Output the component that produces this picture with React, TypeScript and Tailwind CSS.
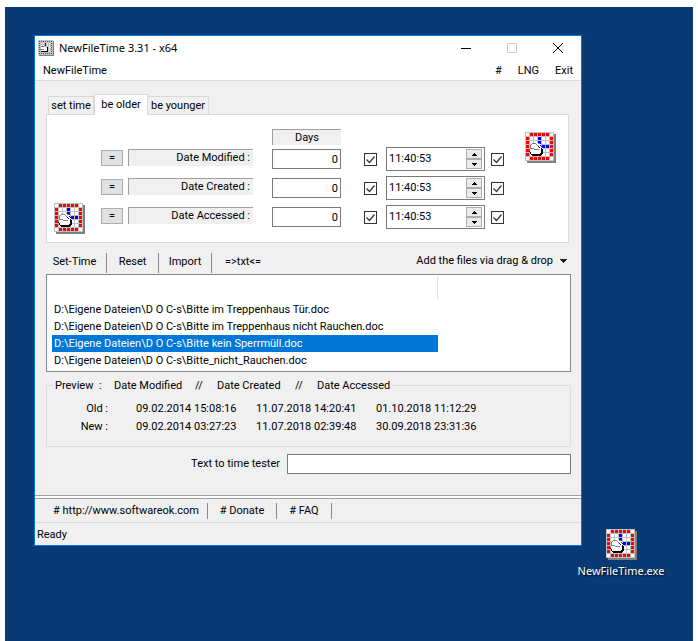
import React, { useState } from "react";

const RED = "#ff0000";
const BLUE = "#0000ff";

function cellColor(row: number, col: number) {
  const rowEdge = row === 0 || row === 6;
  const colEdge = col === 0 || col === 6;
  if (rowEdge && colEdge) return "#ffffff";
  if (rowEdge || colEdge) return RED;
  if (col === 3 && row <= 3) return BLUE;
  if (row === 3 && col >= 4) return BLUE;
  return "#ffffff";
}

function AppIcon() {
  const cells = [0, 1, 2, 3, 4, 5, 6];
  return (
    <svg width="31" height="31" viewBox="0 0 31 31" shapeRendering="crispEdges" aria-hidden="true" className="block shrink-0">
      <path d="M2 2h29v29H2z" fill="#808080" />
      <path d="M0 0h29v29H0z" fill="#c0c0c0" />
      {cells.map((r) =>
        cells.map((c) => (
          <rect key={r + "-" + c} x={1 + c * 4} y={1 + r * 4} width="3" height="3" fill={cellColor(r, c)} />
        )),
      )}
      <path d="M5 14h1v-1h1v-1h5v-1h3v1h1v2h1v2h1v2h-1v3h-1v2h-1v1H6v-2H5z" fill="#fff" />
      <path d="M7 11h4v1H7zM6 12h1v1H6zM5 13h1v3H5zM11 12h1v1h-1zM12 13h1v1h-1zM13 11h2v1h-2zM5 16h4v1H5zM9 17h5v1H9zM4 17h1v2H4z" fill="#808080" />
      <path d="M13 14h1v1h-1zM14 15h1v1h-1zM15 13h1v1h-1zM16 14h1v1h-1z" fill={BLUE} />
      <path d="M4 19h1v1H4zM5 20h1v2H5zM6 22h9v-1h1v-5h1v1h1v5h-1v1h-1v1H7v-1H6z" fill="#000" />
    </svg>
  );
}

function TitleIcon() {
  const dots = [0, 1, 2, 3, 4, 5, 6];
  return (
    <svg width="16" height="16" viewBox="0 0 16 16" shapeRendering="crispEdges" aria-hidden="true" className="block shrink-0">
      <path d="M1 1h15v15H1z" fill="#808080" />
      <path d="M0 0h15v15H0z" fill="#c0c0c0" />
      {dots.map((r) =>
        dots.map((c) => {
          const edge = r === 0 || c === 0 || r === 6 || c === 6;
          return <rect key={r + "-" + c} x={1 + c * 2} y={1 + r * 2} width="1" height="1" fill={edge ? "#e02030" : "#ffffff"} />;
        }),
      )}
      <path d="M3 7h4v1h2v4H3z" fill="#fff" />
      <path d="M3 6h3v1H3zM2 9h4v1H2z" fill="#808080" />
      <path d="M3 11h6v1H3zM9 7h1v5H9z" fill="#000" />
      <path d="M7 3h1v3H7z" fill={BLUE} />
    </svg>
  );
}

function CheckBox({ label }: { label: string }) {
  const [on, setOn] = useState(true);
  return (
    <span className="relative block size-[13px]">
      <input
        type="checkbox"
        aria-label={label}
        checked={on}
        onChange={() => setOn(!on)}
        className="block size-[13px] appearance-none border border-[#333333] bg-white"
      />
      {on && (
        <svg viewBox="0 0 13 13" aria-hidden="true" className="pointer-events-none absolute inset-0 size-[13px]">
          <path d="M2.5 6.5l3 3 5-6" fill="none" stroke="#333333" strokeWidth="1.2" />
        </svg>
      )}
    </span>
  );
}

function Spinner({ name }: { name: string }) {
  return (
    <div className="flex h-6 w-[99px] border border-[#7a7a7a] bg-white px-0.5 py-px">
      <input aria-label={name + " time"} defaultValue="11:40:53" className="min-w-0 flex-1 outline-none" />
      <div className="flex w-4 flex-col">
        <button aria-label={name + " up"} className="flex flex-1 items-center justify-center border border-[#adadad] bg-[#ebebeb]">
          <svg width="5" height="3" viewBox="0 0 5 3" shapeRendering="crispEdges"><path d="M2 0h1v1h1v1h1v1H0V2h1V1h1z" /></svg>
        </button>
        <button aria-label={name + " down"} className="flex flex-1 items-center justify-center border border-[#adadad] bg-[#ebebeb]">
          <svg width="5" height="3" viewBox="0 0 5 3" shapeRendering="crispEdges"><path d="M0 0h5v1H4v1H3v1H2V2H1V1H0z" /></svg>
        </button>
      </div>
    </div>
  );
}

function DateRow({ name }: { name: string }) {
  return (
    <div className="mb-px flex h-7 items-center">
      <button aria-label={"Reset " + name} className="mb-0.5 flex h-4 w-[22px] items-center justify-center border border-[#adadad] bg-[#e1e1e1] leading-3">
        =
      </button>
      <label htmlFor={name} className="mb-[3px] ml-[5px] h-[17px] w-[125px] border-t border-l border-[#a0a0a0] bg-[#f0f0f0] pr-[3px] text-right leading-[15px]">
        {name} :
      </label>
      <input id={name} defaultValue="0" className="ml-[19px] h-5 w-[69px] border border-[#7a7a7a] bg-white pr-0.5 text-right outline-none" />
      <div className="ml-[23px]"><CheckBox label={name + " days"} /></div>
      <div className="mr-[6px] ml-[9px]"><Spinner name={name} /></div>
      <CheckBox label={name + " time"} />
    </div>
  );
}

const files = [
  "D:\\Eigene Dateien\\D O C-s\\Bitte im Treppenhaus Tür.doc",
  "D:\\Eigene Dateien\\D O C-s\\Bitte im Treppenhaus nicht Rauchen.doc",
  "D:\\Eigene Dateien\\D O C-s\\Bitte kein Sperrmüll.doc",
  "D:\\Eigene Dateien\\D O C-s\\Bitte_nicht_Rauchen.doc",
];

const preview = [
  ["Old :", "09.02.2014 15:08:16", "11.07.2018 14:20:41", "01.10.2018 11:12:29"],
  ["New :", "09.02.2014 03:27:23", "11.07.2018 02:39:48", "30.09.2018 23:31:36"],
];

function TitleBar() {
  return (
    <header className="bg-white">
      <div className="flex h-6 items-center pl-[3px]">
        <TitleIcon />
        <h1 className="ml-[5px] flex-1 font-['Noto_Sans',sans-serif]">NewFileTime 3.31 - x64</h1>
        <button aria-label="Minimize" className="flex h-6 w-[46px] items-center justify-center">
          <svg width="10" height="10" viewBox="0 0 10 10" shapeRendering="crispEdges"><path d="M0 5h10v1H0z" /></svg>
        </button>
        <button aria-label="Maximize" disabled className="flex h-6 w-[46px] items-center justify-center">
          <svg width="10" height="10" viewBox="0 0 10 10"><path d="M.5.5h9v9h-9z" fill="none" stroke="#c8c8c8" /></svg>
        </button>
        <button aria-label="Close" className="flex h-6 w-[46px] items-center justify-center">
          <svg width="10" height="10" viewBox="0 0 10 10"><path d="M0 0l10 10M10 0L0 10" stroke="#000" /></svg>
        </button>
      </div>
      <nav className="flex h-[21px] items-center gap-4 border-b border-[#d9d9d9] pt-[3px] pr-2 pl-2">
        <button className="mr-auto">NewFileTime</button>
        <button>#</button>
        <button>LNG</button>
        <button>Exit</button>
      </nav>
    </header>
  );
}

function Tabs() {
  return (
    <section className="mr-3 ml-[11px] pt-[13px]">
      <div role="tablist" className="flex items-end pl-0.5 whitespace-nowrap">
        <button role="tab" className="h-[18px] w-[46px] border border-b-0 border-[#d9d9d9] leading-[18px]">set time</button>
        <button role="tab" aria-selected="true" className="relative -mb-px h-[21px] w-[54px] border border-b-0 border-[#d9d9d9] bg-white pb-0.5 leading-[17px]">be older</button>
        <button role="tab" className="h-[18px] w-[61px] border border-b-0 border-l-0 border-[#d9d9d9] leading-[18px]">be younger</button>
      </div>
      <div className="flex h-[129px] border border-[#d9d9d9] bg-white pr-3 pl-[7px]">
        <div className="self-end pb-2"><AppIcon /></div>
        <div className="ml-4 pt-[14px]">
          <div className="ml-[171px] h-4 w-[69px] border-t border-l border-[#a0a0a0] bg-[#f0f0f0] text-center leading-[15px]">Days</div>
          <DateRow name="Date Modified" />
          <DateRow name="Date Created" />
          <DateRow name="Date Accessed" />
        </div>
        <div className="ml-auto pt-[17px]"><AppIcon /></div>
      </div>
    </section>
  );
}

function FileList() {
  const [selected, setSelected] = useState(2);
  return (
    <section className="mr-[10px] ml-[11px]">
      <div className="flex h-[31px] items-center pt-2">
        <button className="h-5 w-[61px] border-r border-[#8a8a8a] pr-[3px]">Set-Time</button>
        <button className="h-5 w-[52px] border-r border-[#8a8a8a]">Reset</button>
        <button className="h-5 w-[53px] border-r border-[#8a8a8a]">Import</button>
        <button className="ml-[13px]">=&gt;txt&lt;=</button>
        <button className="mr-1 mb-[3px] ml-auto flex items-center gap-[7px]">
          Add the files via drag &amp; drop
          <svg width="7" height="4" viewBox="0 0 7 4" shapeRendering="crispEdges"><path d="M0 0h7v1H6v1H5v1H4v1H3V3H2V2H1V1H0z" fill="#222" /></svg>
        </button>
      </div>
      <div className="h-[98px] border border-[#828790] bg-white px-[5px] pt-px">
        <div className="mb-px h-6 w-[386px] border-r border-[#e0e0e0]" />
        <ul role="listbox" aria-label="Files">
          {files.map((f, i) => (
            <li
              key={f}
              role="option"
              aria-selected={i === selected}
              onClick={() => setSelected(i)}
              className={i === selected ? "h-[17px] w-[386px] bg-[#0078d7] pl-0.5 leading-[17px] whitespace-nowrap text-white" : "h-[17px] w-[386px] pl-0.5 leading-[17px] whitespace-nowrap"}
            >
              {f}
            </li>
          ))}
        </ul>
      </div>
    </section>
  );
}

function Preview() {
  return (
    <fieldset className="mt-[5px] mr-[10px] ml-[11px] h-[70px] border border-[#dcdcdc]">
      <legend className="ml-[6px] flex h-4 px-0.5 leading-[17px]">
        <span className="w-[44px]">Preview</span>
        <span className="w-[15px]">:</span>
        <span className="w-[81px]">Date Modified</span>
        <span className="w-[22px]">//</span>
        <span className="w-[78px]">Date Created</span>
        <span className="w-[22px]">//</span>
        <span>Date Accessed</span>
      </legend>
      <table className="mt-[7px] leading-[18px] whitespace-nowrap">
        <tbody>
          {preview.map((r) => (
            <tr key={r[0]}>
              <th scope="row" className="w-[61px] p-0 text-right font-normal">{r[0]}</th>
              <td className="w-[148px] p-0 pl-7">{r[1]}</td>
              <td className="w-[120px] p-0">{r[2]}</td>
              <td className="p-0">{r[3]}</td>
            </tr>
          ))}
        </tbody>
      </table>
    </fieldset>
  );
}

export default function App() {
  return (
    <div className="min-h-screen bg-white px-[5px] pt-[7px] font-['Roboto','Liberation_Sans',sans-serif] text-[11px] text-black">
      <main className="relative min-h-[634px] bg-[#093a75]">
        <div className="absolute top-7 left-[29px] w-[548px] border border-[#0078d7] bg-[#f0f0f0]">
          <TitleBar />
          <Tabs />
          <FileList />
          <Preview />
          <div className="mt-[7px] mr-[10px] mb-[21px] flex items-center justify-end gap-[7px]">
            <label htmlFor="tester">Text to time tester</label>
            <input id="tester" className="h-5 w-[284px] border border-[#7a7a7a] bg-white px-1 outline-none" />
          </div>
          <div className="h-1 border-y border-[#a0a0a0] bg-white" />
          <nav className="flex h-6 items-center border-b border-[#d9d9d9] pt-px pl-[18px] leading-4 whitespace-nowrap">
            <a href="http://www.softwareok.com" className="w-[155px] border-r border-[#8a8a8a]"># http://www.softwareok.com</a>
            <a href="#donate" className="w-[69px] border-r border-[#8a8a8a] text-center"># Donate</a>
            <a href="#faq" className="w-[55px] border-r border-[#8a8a8a] text-center"># FAQ</a>
          </nav>
          <footer className="h-[22px] pt-px pl-0.5 leading-[22px]">Ready</footer>
        </div>
        <button className="absolute top-[522px] left-[566px] flex w-[100px] flex-col items-center font-['Noto_Sans',sans-serif] leading-[18px] text-white [text-shadow:1px_1px_2px_#000]">
          <AppIcon />
          <span className="mt-0.5">NewFileTime.exe</span>
        </button>
      </main>
    </div>
  );
}
